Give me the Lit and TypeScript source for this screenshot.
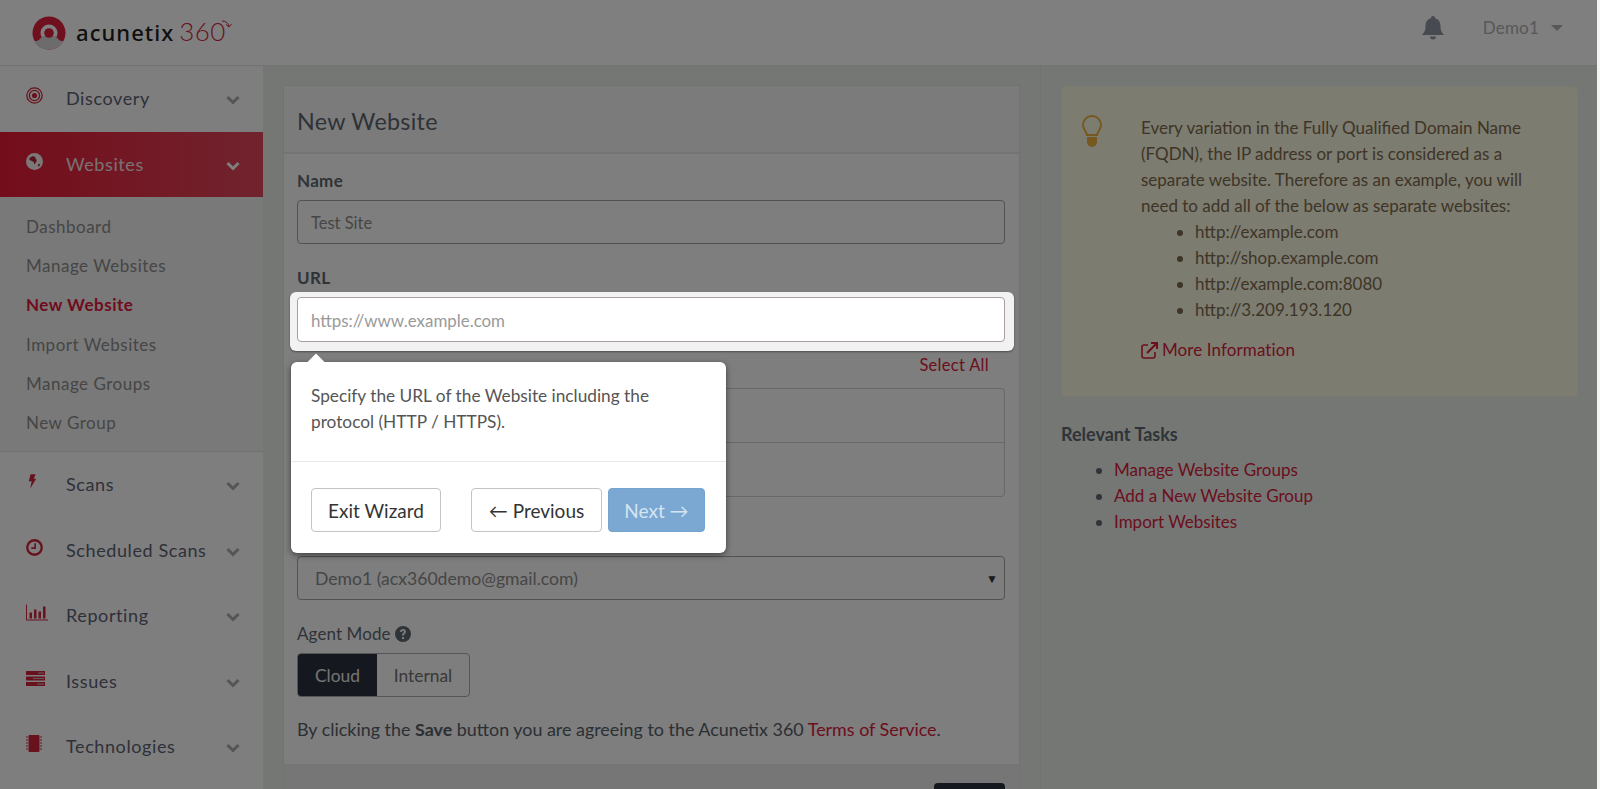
import { LitElement, html, css, svg } from "lit";
import { customElement } from "lit/decorators.js";

const chevron = html`<svg class="chev" viewBox="0 0 14 10"><path d="M1.500 2 7 7.500 12.500 2" fill="none" stroke="currentColor" stroke-width="3"/></svg>`;

const icons: Record<string, unknown> = {
  discovery: svg`<circle cx="8" cy="8" r="7.200" fill="none" stroke="currentColor" stroke-width="1.200"/><circle cx="8" cy="8" r="4.800" fill="none" stroke="currentColor" stroke-width="1.200"/><circle cx="8" cy="8" r="2.400" fill="currentColor"/>`,
  websites: svg`<circle cx="8" cy="8" r="8" fill="currentColor"/><path d="M3 5 6 3l2.600.6.400 1.800 1.200 1.200-.8 2.200-1.400 2-.8-2.400L5 7.400 3.400 6.600z" fill="#b0223a"/><path d="M11 11l1.600-1 .8 1-1.400 2z" fill="#b0223a"/>`,
  scans: svg`<path d="M5 0h5.500L8.400 5H11L4.600 16l1.600-8.200H3z" fill="currentColor"/>`,
  scheduled: svg`<circle cx="8" cy="8" r="6.800" fill="none" stroke="currentColor" stroke-width="2.200"/><path d="M8.600 4v4.600H5" fill="none" stroke="currentColor" stroke-width="1.500"/>`,
  reporting: svg`<path d="M.5 0v15.500H22" fill="none" stroke="currentColor" stroke-width="1"/><path d="M3.500 8h2.500v6H3.500zM8 5h2.500v9H8zM12.500 7H15v7h-2.500zM17 2h2.500v12H17z" fill="currentColor"/>`,
  issues: svg`<path d="M0 0h19v4H0zM0 5.500h19v4H0zM0 11h19v4H0z" fill="currentColor"/><path d="M12 1.500h6v1h-6zM7 7h11v1H7zM11 12.500h7v1h-7z" fill="#bbb"/>`,
  tech: svg`<rect x="2.500" y="0" width="11" height="17" rx="1" fill="currentColor"/><path d="M0 2h2M0 5h2M0 8h2M0 11h2M0 14h2M14 2h2M14 5h2M14 8h2M14 11h2M14 14h2" stroke="currentColor" stroke-width="1"/>`,
};

const vb: Record<string, string> = {
  discovery: "0 0 16 16",
  websites: "0 0 16 16",
  scans: "0 0 12 16",
  scheduled: "0 0 16 16",
  reporting: "0 0 22 16",
  issues: "0 0 19 15",
  tech: "0 0 16 17",
};

@customElement("app-root")
export class AppRoot extends LitElement {
  static styles = css`
    :host { display: block; width: 1600px; height: 789px; overflow: hidden; font-family: Lato, "Noto Sans", sans-serif; font-size: 17px; color: #5a6068; background: #f4f4f4; position: relative; }
    * { box-sizing: border-box; }
    .shell { width: 1597px; height: 789px; background: #eaeeeb; border-right: 0; }
    .top { height: 66px; background: #fff; border-bottom: 1px solid #e4e6e4; display: flex; align-items: center; padding: 0 34px 0 32px; }
    .logo { display: flex; align-items: center; gap: 10px; }
    .wordmark { font-family: "Noto Sans", sans-serif; font-weight: 500; font-size: 22px; color: #1c1e24; letter-spacing: 1.050px; line-height: 1; margin-top: -3px; }
    .three { font-family: Lato, sans-serif; font-weight: 300; font-size: 26px; color: #d0243c; margin-left: 5px; letter-spacing: .4px; position: relative; }
    .arrow { position: absolute; right: -6px; top: 5px; width: 11px; height: 10px; }
    .spacer { flex: 1; }
    .bell { width: 22px; height: 24px; color: #8f96a2; margin: -10px 39px 0 0; }
    .user { font-size: 17px; color: #b0b0b0; letter-spacing: .2px; margin-top: -10px; }
    .caret { width: 0; height: 0; border-left: 6px solid transparent; border-right: 6px solid transparent; border-top: 6px solid #b0b0b0; margin: -10px 0 0 12px; }
    .layout { display: flex; height: 723px; }
    .side { width: 263px; flex: none; background: #fcfcfc; }
    .nav { height: 65.500px; display: flex; align-items: center; padding-left: 26px; padding-right: 23px; color: #5c6274; font-size: 18px; letter-spacing: .6px; }
    .nav .ic { width: 40px; flex: none; display: flex; margin-top: -6px; color: #d0243c; }
    .nav .ic svg { display: block; }
    .nav .label { flex: 1; margin-top: -1px; }
    .chev { width: 14px; height: 10px; color: #aaa; margin-top: 3px; }
    .nav.active { background: linear-gradient(90deg, #e81a36, #e2485c); color: #f0e4e6; }
    .nav.active .ic { color: #f8f0f0; }
    .nav.active .chev { color: #fff; }
    .sub { background: #f2f2f2; border-bottom: 1px solid #e2e2e2; padding: 10px 0 9px 26px; }
    .sub div { height: 39.200px; line-height: 39.200px; font-size: 17px; letter-spacing: .5px; color: #8c8c8c; }
    .sub div.cur { color: #e0183c; font-weight: 700; }
    .main { flex: 1; display: flex; padding: 19px 0 0 20px; min-width: 0; }
    .panel { width: 737px; flex: none; border: 1px solid #e2e4e2; border-bottom: 0; background: #fcfcfc; display: flex; flex-direction: column; height: 720px; }
    .phead { height: 68px; flex: none; display: flex; align-items: center; padding: 3px 0 0 13px; font-size: 23.300px; color: #5c6670; border-bottom: 2px solid #e6e8e6; background: #f6f6f6; letter-spacing: .3px; }
    .pbody { padding: 14px 14px 0 13px; flex: none; }
    label { display: block; height: 26px; line-height: 26px; margin-bottom: 6px; font-size: 17px; letter-spacing: .3px; font-weight: 700; color: #5e6870; }
    .field { height: 44px; border: 1px solid #a4a4a4; border-radius: 4px; padding: 1px 13px 0; display: flex; align-items: center; font-size: 16.500px; color: #8c8c8c; width: 100%; background: transparent; font-family: inherit; }
    .group { margin-bottom: 21px; }
    .spot { position: relative; z-index: 1001; margin: -5px -9px -9px -7px; padding: 5px 9px 9px 7px; background: #f2f2f2; border-radius: 6px; box-shadow: 0 1px 2px rgba(0,0,0,.4); }
    .spot input { height: 45px; border-color: #a8a0a0; outline: none; background: #fff; font-size: 16.900px; }
    .spot input::placeholder { color: #9a9a9a; opacity: 1; }
    .pop { position: absolute; left: 1px; top: 70px; width: 435px; height: 191px; background: #fff; border-radius: 6px; box-shadow: 0 2px 6px rgba(0,0,0,.5); color: #555; z-index: 1002; }
    .pop::before { content: ""; position: absolute; left: 19px; top: -6px; width: 12px; height: 12px; background: #fff; transform: rotate(45deg); }
    .ptext { height: 100px; padding: 21px 20px 0; font-size: 17.250px; line-height: 26px; border-bottom: 1px solid #eaeaea; }
    .pbtns { display: flex; padding: 26px 20px 0; }
    .btn { height: 44px; border: 1px solid #c4c4c4; border-radius: 4px; background: #fff; color: #333; font-size: 19px; display: flex; align-items: center; justify-content: center; font-family: inherit; }
    .exit { width: 130px; margin-right: 30px; }
    .prev { width: 131px; margin-right: 6px; }
    .next { width: 97px; background: #7aa8d2; border-color: #73a3cf; color: #d6e4f1; }
    .selall { display: flex; justify-content: flex-end; padding-right: 16px; height: 26px; line-height: 26px; margin-top: -20px; margin-bottom: 10px; color: #d8203a; font-size: 16.500px; letter-spacing: .3px; }
    .box { height: 109px; border: 1px solid #d0d0d0; border-radius: 4px; display: flex; flex-direction: column; margin-bottom: 28px; }
    .box div { flex: 1; }
    .box div + div { border-top: 1px solid #d0d0d0; }
    .hidden { margin-bottom: 5px; }
    .sel { justify-content: space-between; padding: 0 6px 0 17px; font-size: 17.600px; }
    .sel span:last-child { font-size: 12px; color: #333; }
    .help { display: inline-block; width: 16px; height: 16px; vertical-align: -2px; color: #5e6870; }
    .plain { font-weight: 400; margin-bottom: 6px; letter-spacing: .1px; }
    .toggle { display: flex; width: 173px; height: 44px; border: 1px solid #aaa; border-radius: 4px; overflow: hidden; margin-bottom: 19px; }
    .toggle div { display: flex; align-items: center; justify-content: center; font-size: 17.400px; }
    .toggle .on { width: 79px; background: #2c3040; color: #e8e8e8; }
    .toggle .off { flex: 1; color: #707070; }
    .terms { height: 26px; line-height: 26px; font-size: 17.900px; color: #566068; white-space: nowrap; }
    .terms b { font-weight: 700; }
    .terms a, .link { color: #d8203a; }
    .terms a { font-weight: 400; }
    .pfoot { margin-top: 22px; flex: 1; background: #ececec; display: flex; justify-content: flex-end; padding: 19px 14px 0; }
    .save { width: 71px; height: 44px; border-radius: 4px; background: #2c3040; }
    .aside { flex: 1; margin-left: 20px; border-left: 1px solid #e0e2e0; padding: 20px 20px 0 20px; margin-top: -19px; }
    .tip { height: 311px; width: 517px; background: #f8f8e2; border: 1px solid #f2f2e0; border-radius: 4px; display: flex; padding: 28px 0 0 20px; color: #7e6a4c; font-size: 17px; line-height: 26px; }
    .bulb { width: 20px; height: 32px; color: #ecb040; flex: none; margin-right: 39px; }
    .tip-text { width: 400px; }
    .tip ul { margin: 0; padding: 0 0 0 54px; }
    .tip li { height: 26px; }
    .more { margin-top: 14px; display: flex; align-items: center; gap: 4px; color: #d8203a; white-space: nowrap; letter-spacing: .1px; }
    .more svg { width: 17px; height: 17px; }
    .tasks { margin-top: 24px; font-size: 18px; font-weight: 700; color: #5e6870; line-height: 26px; }
    .tasks ul { margin: 10px 0 0; padding: 0 0 0 53px; font-weight: 400; font-size: 17px; color: #5e6870; }
    .overlay { position: absolute; left: 0; top: 0; bottom: 0; width: 1597px; background: rgba(0,0,0,.5); z-index: 1000; }
  `;

  private nav(id: string, label: string, active = false) {
    const w: Record<string, number> = { discovery: 17, websites: 17, scans: 11, scheduled: 17, reporting: 22, issues: 19, tech: 16 };
    return html`<div class="nav ${active ? "active" : ""}">
      <span class="ic"><svg width=${w[id]} height="17" viewBox=${vb[id]}>${icons[id]}</svg></span>
      <span class="label">${label}</span>${chevron}
    </div>`;
  }

  render() {
    return html`
      <div class="shell">
      <div class="top">
        <div class="logo">
          <svg width="34" height="34" viewBox="0 0 34 34">
            <circle cx="17" cy="17" r="16.500" fill="#e01f3d"/>
            <path d="M2.500 25c3 5.500 8.500 8.500 14.500 8.500S28.500 30.500 31.500 25c-2.500 0-5-.5-6-3H8.500c-1 2.500-3.500 3-6 3z" fill="#d8d8d8"/>
            <circle cx="17" cy="17" r="8.500" fill="#fff"/>
            <path d="M9 20c1 4 4 5.500 8 5.500s7-1.500 8-5.500z" fill="#d8d8d8"/>
            <circle cx="17" cy="17" r="4.800" fill="#e01f3d"/>
          </svg>
          <span class="wordmark">acunetix<span class="three">360<svg class="arrow" viewBox="0 0 11 10"><path d="M1 1c3 0 6 1.500 7 5M10.500 4 8 7 5 4.500" fill="none" stroke="#d0243c" stroke-width="1"/></svg></span></span>
        </div>
        <div class="spacer"></div>
        <svg class="bell" viewBox="0 0 22 24"><path d="M11 0a2 2 0 0 1 2 2.300c3.600.8 5.500 3.800 5.500 7.700 0 5 1.500 6.500 3.500 9H0c2-2.500 3.500-4 3.500-9 0-3.900 1.900-6.900 5.500-7.700A2 2 0 0 1 11 0zM8 20.500h6a3 3 0 0 1-6 0z" fill="currentColor"/></svg>
        <span class="user">Demo1</span><span class="caret"></span>
      </div>
      <div class="layout">
        <div class="side">
          ${this.nav("discovery", "Discovery")}
          ${this.nav("websites", "Websites", true)}
          <div class="sub">
            <div>Dashboard</div><div>Manage Websites</div><div class="cur">New Website</div>
            <div>Import Websites</div><div>Manage Groups</div><div>New Group</div>
          </div>
          ${this.nav("scans", "Scans")}
          ${this.nav("scheduled", "Scheduled Scans")}
          ${this.nav("reporting", "Reporting")}
          ${this.nav("issues", "Issues")}
          ${this.nav("tech", "Technologies")}
        </div>
        <div class="main">
          <div class="panel">
            <div class="phead">New Website</div>
            <div class="pbody">
              <div class="group"><label>Name</label><div class="field">Test Site</div></div>
              <div class="group">
                <label>URL</label>
                <div class="spot">
                  <input class="field" placeholder="https://www.example.com" />
                  <div class="pop">
                    <div class="ptext">Specify the URL of the Website including the protocol (HTTP / HTTPS).</div>
                    <div class="pbtns">
                      <div class="btn exit">Exit Wizard</div>
                      <div class="btn prev">← Previous</div>
                      <div class="btn next">Next →</div>
                    </div>
                  </div>
                </div>
              </div>
              <div class="selall">Select All</div>
              <div class="box"><div></div><div></div></div>
              <label class="hidden">&nbsp;</label>
              <div class="group"><div class="field sel"><span>Demo1 (acx360demo@gmail.com)</span><span>▼</span></div></div>
              <label class="plain">Agent Mode
                <svg class="help" viewBox="0 0 16 16"><path fill="currentColor" fill-rule="evenodd" d="M8 0a8 8 0 1 1 0 16A8 8 0 0 1 8 0zM7 11v2h2v-2zM5 6h2c0-.7.4-1.200 1-1.200s1 .4 1 .9c0 1-2 1.300-2 3.800h2c0-1.800 2-2 2-4C11 3.900 9.700 3 8 3S5 4.200 5 6z"/></svg>
              </label>
              <div class="toggle"><div class="on">Cloud</div><div class="off">Internal</div></div>
              <div class="terms">By clicking the <b>Save</b> button you are agreeing to the Acunetix 360 <a>Terms of Service</a>.</div>
            </div>
            <div class="pfoot"><div class="save"></div></div>
          </div>
          <div class="aside">
            <div class="tip">
              <svg class="bulb" viewBox="0 0 20 32"><path d="M10 1a9 9 0 0 1 9 9c0 4-3 6-4 10H5C4 16 1 14 1 10a9 9 0 0 1 9-9z" fill="none" stroke="currentColor" stroke-width="2"/><path d="M5 22h10v5a5 5 0 0 1-10 0z" fill="currentColor"/></svg>
              <div class="tip-text">
                <div>Every variation in the Fully Qualified Domain Name (FQDN), the IP address or port is considered as a separate website. Therefore as an example, you will need to add all of the below as separate websites:</div>
                <ul><li>http://example.com</li><li>http://shop.example.com</li><li>http://example.com:8080</li><li>http://3.209.193.120</li></ul>
                <div class="more"><svg viewBox="0 0 17 17"><path d="M7 3H3a2 2 0 0 0-2 2v9a2 2 0 0 0 2 2h9a2 2 0 0 0 2-2v-4" fill="none" stroke="currentColor" stroke-width="1.600"/><path d="M6 11 15 2M10 1h6v6" fill="none" stroke="currentColor" stroke-width="2"/></svg>More Information</div>
              </div>
            </div>
            <div class="tasks">Relevant Tasks
              <ul><li><span class="link">Manage Website Groups</span></li><li><span class="link">Add a New Website Group</span></li><li><span class="link">Import Websites</span></li></ul>
            </div>
          </div>
        </div>
      </div>
      </div>
      <div class="overlay"></div>
    `;
  }
}
